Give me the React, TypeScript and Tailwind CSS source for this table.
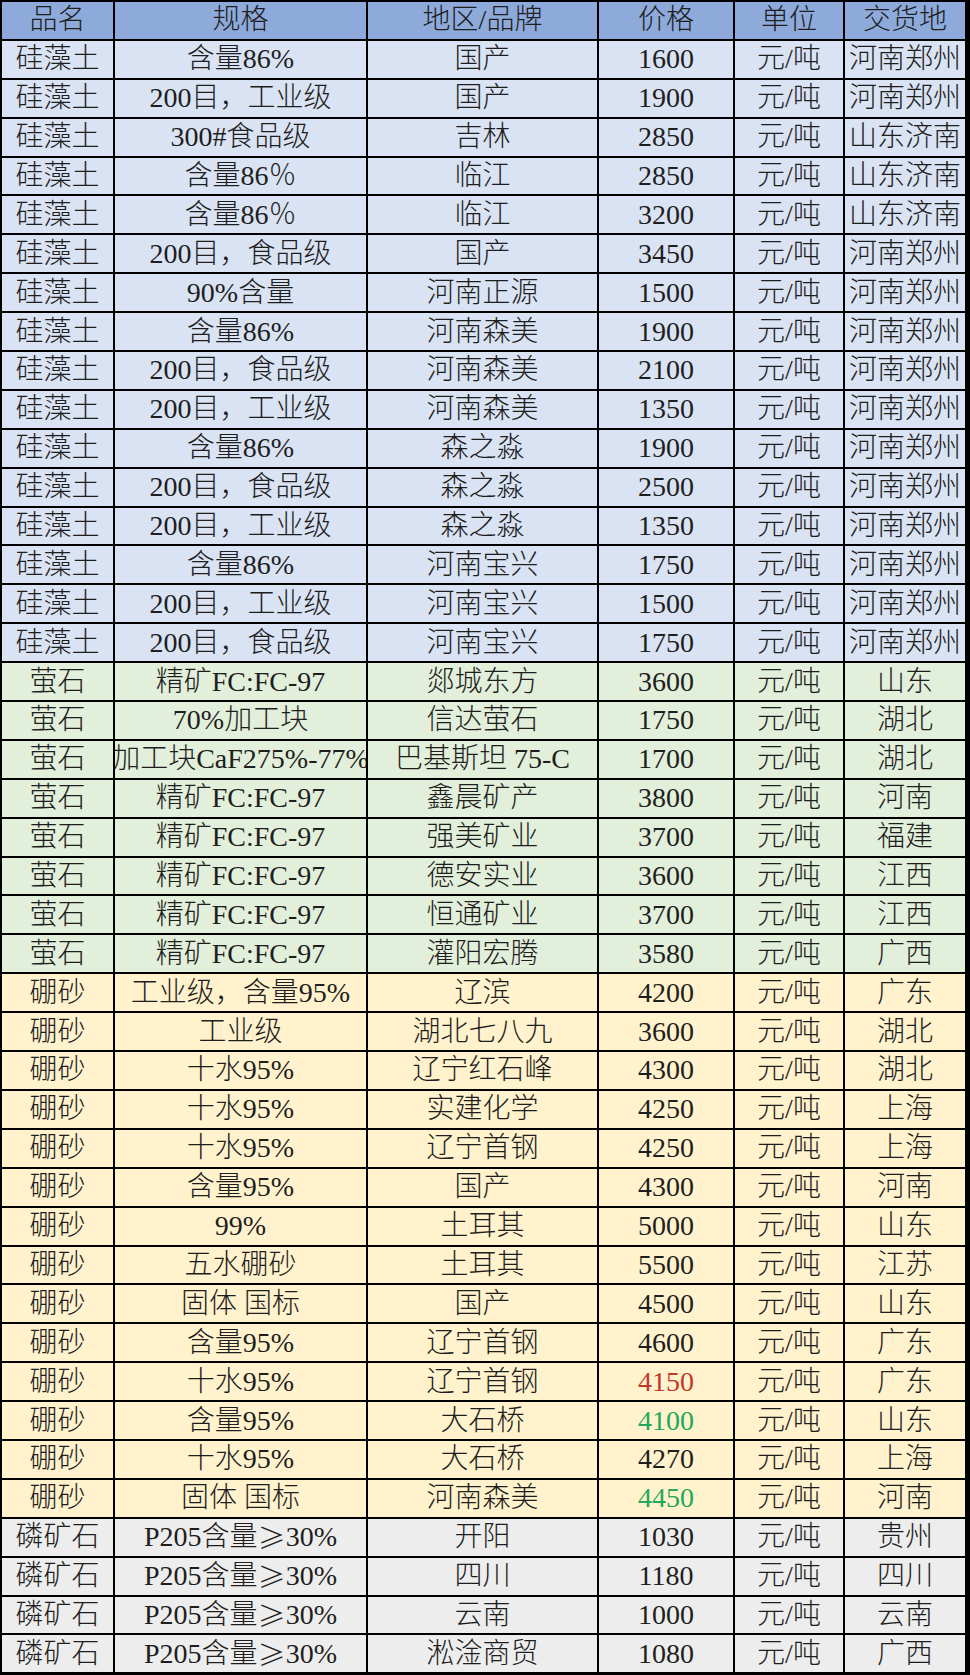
import React from "react";

type Row = [string, string, string, string, string, string, string?];

const rows: { bg: string; items: Row[] }[] = [
  {
    bg: "bg-[#dae3f3]",
    items: [
      ["硅藻土", "含量86%", "国产", "1600", "元/吨", "河南郑州"],
      ["硅藻土", "200目，工业级", "国产", "1900", "元/吨", "河南郑州"],
      ["硅藻土", "300#食品级", "吉林", "2850", "元/吨", "山东济南"],
      ["硅藻土", "含量86％", "临江", "2850", "元/吨", "山东济南"],
      ["硅藻土", "含量86％", "临江", "3200", "元/吨", "山东济南"],
      ["硅藻土", "200目，食品级", "国产", "3450", "元/吨", "河南郑州"],
      ["硅藻土", "90%含量", "河南正源", "1500", "元/吨", "河南郑州"],
      ["硅藻土", "含量86%", "河南森美", "1900", "元/吨", "河南郑州"],
      ["硅藻土", "200目，食品级", "河南森美", "2100", "元/吨", "河南郑州"],
      ["硅藻土", "200目，工业级", "河南森美", "1350", "元/吨", "河南郑州"],
      ["硅藻土", "含量86%", "森之淼", "1900", "元/吨", "河南郑州"],
      ["硅藻土", "200目，食品级", "森之淼", "2500", "元/吨", "河南郑州"],
      ["硅藻土", "200目，工业级", "森之淼", "1350", "元/吨", "河南郑州"],
      ["硅藻土", "含量86%", "河南宝兴", "1750", "元/吨", "河南郑州"],
      ["硅藻土", "200目，工业级", "河南宝兴", "1500", "元/吨", "河南郑州"],
      ["硅藻土", "200目，食品级", "河南宝兴", "1750", "元/吨", "河南郑州"],
    ],
  },
  {
    bg: "bg-[#e2efda]",
    items: [
      ["萤石", "精矿FC:FC-97", "郯城东方", "3600", "元/吨", "山东"],
      ["萤石", "70%加工块", "信达萤石", "1750", "元/吨", "湖北"],
      ["萤石", "加工块CaF275%-77%", "巴基斯坦 75-C", "1700", "元/吨", "湖北"],
      ["萤石", "精矿FC:FC-97", "鑫晨矿产", "3800", "元/吨", "河南"],
      ["萤石", "精矿FC:FC-97", "强美矿业", "3700", "元/吨", "福建"],
      ["萤石", "精矿FC:FC-97", "德安实业", "3600", "元/吨", "江西"],
      ["萤石", "精矿FC:FC-97", "恒通矿业", "3700", "元/吨", "江西"],
      ["萤石", "精矿FC:FC-97", "灌阳宏腾", "3580", "元/吨", "广西"],
    ],
  },
  {
    bg: "bg-[#fff2cc]",
    items: [
      ["硼砂", "工业级，含量95%", "辽滨", "4200", "元/吨", "广东"],
      ["硼砂", "工业级", "湖北七八九", "3600", "元/吨", "湖北"],
      ["硼砂", "十水95%", "辽宁红石峰", "4300", "元/吨", "湖北"],
      ["硼砂", "十水95%", "实建化学", "4250", "元/吨", "上海"],
      ["硼砂", "十水95%", "辽宁首钢", "4250", "元/吨", "上海"],
      ["硼砂", "含量95%", "国产", "4300", "元/吨", "河南"],
      ["硼砂", "99%", "土耳其", "5000", "元/吨", "山东"],
      ["硼砂", "五水硼砂", "土耳其", "5500", "元/吨", "江苏"],
      ["硼砂", "固体 国标", "国产", "4500", "元/吨", "山东"],
      ["硼砂", "含量95%", "辽宁首钢", "4600", "元/吨", "广东"],
      ["硼砂", "十水95%", "辽宁首钢", "4150", "元/吨", "广东", "red"],
      ["硼砂", "含量95%", "大石桥", "4100", "元/吨", "山东", "green"],
      ["硼砂", "十水95%", "大石桥", "4270", "元/吨", "上海"],
      ["硼砂", "固体 国标", "河南森美", "4450", "元/吨", "河南", "green"],
    ],
  },
  {
    bg: "bg-[#ededed]",
    items: [
      ["磷矿石", "P205含量≥30%", "开阳", "1030", "元/吨", "贵州"],
      ["磷矿石", "P205含量≥30%", "四川", "1180", "元/吨", "四川"],
      ["磷矿石", "P205含量≥30%", "云南", "1000", "元/吨", "云南"],
      ["磷矿石", "P205含量≥30%", "淞淦商贸", "1080", "元/吨", "广西"],
    ],
  },
];

const header = ["品名", "规格", "地区/品牌", "价格", "单位", "交货地"];

function renderText(t: string) {
  if (!t.includes("≥")) return <span>{t}</span>;
  const parts = t.split("≥");
  return (
    <>
      <span>{parts[0]}</span>
      <span style={{ fontFamily: '"Noto Sans CJK SC", sans-serif', lineHeight: "28px" }}>≥</span>
      <span>{parts[1]}</span>
    </>
  );
}

function Cell({
  children,
  bg,
  color,
}: {
  children: React.ReactNode;
  bg: string;
  color?: string;
}) {
  return (
    <div
      className={`${bg} h-[36.9px] flex items-center justify-center overflow-hidden whitespace-nowrap leading-none ${
        color ?? "text-[#1e1e1e]"
      }`}
    >
      <div className="shrink-0 flex items-center">{children}</div>
    </div>
  );
}

export default function App() {
  return (
    <div
      className="w-[970px] h-[1675px] bg-black pt-[2px] pl-[2px] pr-[5px] pb-[3px] text-[28px] font-light"
      style={{ fontFamily: '"Liberation Serif", "Noto Sans CJK SC", serif' }}
    >
      <div className="grid grid-cols-[111px_251px_229px_134px_108px_120px] gap-[2px]">
        {header.map((h) => (
          <Cell key={h} bg="bg-[#8eaadb]">
            <span>{h}</span>
          </Cell>
        ))}
        {rows.map((g, gi) =>
          g.items.map((r, ri) => {
            const color =
              r[6] === "red"
                ? "text-[#c0392b]"
                : r[6] === "green"
                ? "text-[#22a85a]"
                : undefined;
            return (
              <React.Fragment key={`${gi}-${ri}`}>
                <Cell bg={g.bg}>
                  <span>{r[0]}</span>
                </Cell>
                <Cell bg={g.bg}>{renderText(r[1])}</Cell>
                <Cell bg={g.bg}>
                  <span>{r[2]}</span>
                </Cell>
                <Cell bg={g.bg} color={color}>
                  <span>{r[3]}</span>
                </Cell>
                <Cell bg={g.bg}>
                  <span>{r[4]}</span>
                </Cell>
                <Cell bg={g.bg}>
                  <span>{r[5]}</span>
                </Cell>
              </React.Fragment>
            );
          })
        )}
      </div>
    </div>
  );
}
